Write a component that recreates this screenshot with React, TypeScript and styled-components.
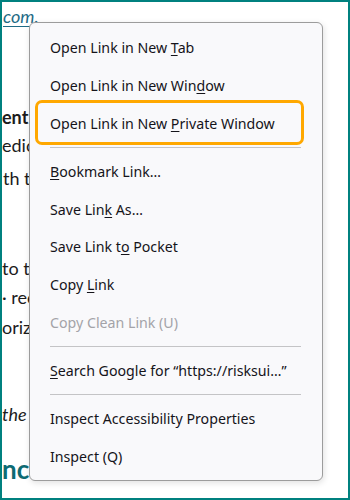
import React from "react";
import styled, { createGlobalStyle } from "styled-components";

const Global = createGlobalStyle`
  html, body { margin: 0; padding: 0; background: #fff; }
  body { width: 350px; height: 500px; overflow: hidden; }
`;

const Frame = styled.div`
  position: relative;
  width: 350px;
  height: 500px;
  box-sizing: border-box;
  border: 2px solid #00817f;
  overflow: hidden;
  background: #fff;
`;

const Page = styled.div`
  display: flex;
  flex-direction: column;
  font-family: Lato, "Noto Sans", sans-serif;
  font-size: 18px;
  color: #1c1c1c;
  white-space: nowrap;
`;

const Line = styled.div<{ $top: number; $indent?: number }>`
  margin-top: ${(p) => p.$top}px;
  padding-left: ${(p) => p.$indent ?? 0}px;
  line-height: 24px;
  height: 24px;
`;

const LinkText = styled.span`
  color: #1f6b86;
  font-style: italic;
  text-decoration: underline;
  text-decoration-thickness: 1px;
  text-underline-offset: 3px;
`;

const Bold = styled.span`
  font-weight: 700;
`;

const Italic = styled.span`
  font-style: italic;
`;

const Heading = styled.span`
  font-weight: 700;
  font-size: 26px;
  color: #0e6b73;
`;

const Menu = styled.div`
  position: absolute;
  left: 27px;
  top: 20px;
  width: 294px;
  box-sizing: border-box;
  padding: 6px 0 5px;
  background: #f9f9fb;
  border: 1px solid #9c9c9c;
  border-radius: 6px;
  box-shadow: 1px 2px 6px rgba(0, 0, 0, 0.12);
  display: flex;
  flex-direction: column;
  font-family: "Noto Sans", "Open Sans", sans-serif;
  font-size: 14.2px;
  color: #15141a;
`;

const Item = styled.div<{ $disabled?: boolean; $focused?: boolean }>`
  position: relative;
  height: 37.7px;
  margin: 0 21px 0 8px;
  padding-left: 12px;
  display: flex;
  align-items: center;
  color: ${(p) => (p.$disabled ? "#a3a3a8" : "#15141a")};
  white-space: nowrap;
  &::after {
    content: "";
    display: ${(p) => (p.$focused ? "block" : "none")};
    position: absolute;
    left: -3px;
    right: -3px;
    top: -4px;
    bottom: -2.5px;
    border: 3px solid #ffa800;
    border-radius: 7px;
    box-sizing: border-box;
  }
`;

const Label = styled.span`
  white-space: pre;
`;

const Key = styled.span`
  text-decoration: underline;
  text-underline-offset: 2px;
`;

const Separator = styled.div`
  height: 1px;
  background: #c4c4c6;
  margin: 4.5px 21px 5px 20px;
`;

type Entry =
  | { kind: "sep" }
  | { kind: "item"; label: React.ReactNode; disabled?: boolean; focused?: boolean };

const entries: Entry[] = [
  { kind: "item", label: <>Open Link in New <Key>T</Key>ab</> },
  { kind: "item", label: <>Open Link in New Win<Key>d</Key>ow</> },
  { kind: "item", label: <>Open Link in New <Key>P</Key>rivate Window</>, focused: true },
  { kind: "sep" },
  { kind: "item", label: <><Key>B</Key>ookmark Link…</> },
  { kind: "item", label: <>Save Lin<Key>k</Key> As…</> },
  { kind: "item", label: <>Save Link t<Key>o</Key> Pocket</> },
  { kind: "item", label: <>Copy <Key>L</Key>ink</> },
  { kind: "item", label: <>Copy Clean Link (U)</>, disabled: true },
  { kind: "sep" },
  { kind: "item", label: <><Key>S</Key>earch Google for “https://risksui…”</> },
  { kind: "sep" },
  { kind: "item", label: <>Inspect Accessibility Properties</> },
  { kind: "item", label: <>Inspect (Q)</> },
];

export default function App() {
  return (
    <Frame>
      <Global />
      <Page>
        <Line $top={2} $indent={1}>
          <LinkText>com.</LinkText>
        </Line>
        <Line $top={77} $indent={0}>
          <Bold>ent</Bold>
        </Line>
        <Line $top={4} $indent={0}>edic</Line>
        <Line $top={9} $indent={1}>th t</Line>
        <Line $top={66} $indent={0}>to t</Line>
        <Line $top={5} $indent={0}>· rec</Line>
        <Line $top={6} $indent={0}>oriz</Line>
        <Line $top={63} $indent={0}>
          <Italic>the</Italic>
        </Line>
        <Line $top={31} $indent={0}>
          <Heading>nc</Heading>
        </Line>
      </Page>
      <Menu>
        {entries.map((e, i) =>
          e.kind === "sep" ? (
            <Separator key={i} />
          ) : (
            <Item key={i} $disabled={e.disabled} $focused={e.focused}>
              <Label>{e.label}</Label>
            </Item>
          )
        )}
      </Menu>
    </Frame>
  );
}
